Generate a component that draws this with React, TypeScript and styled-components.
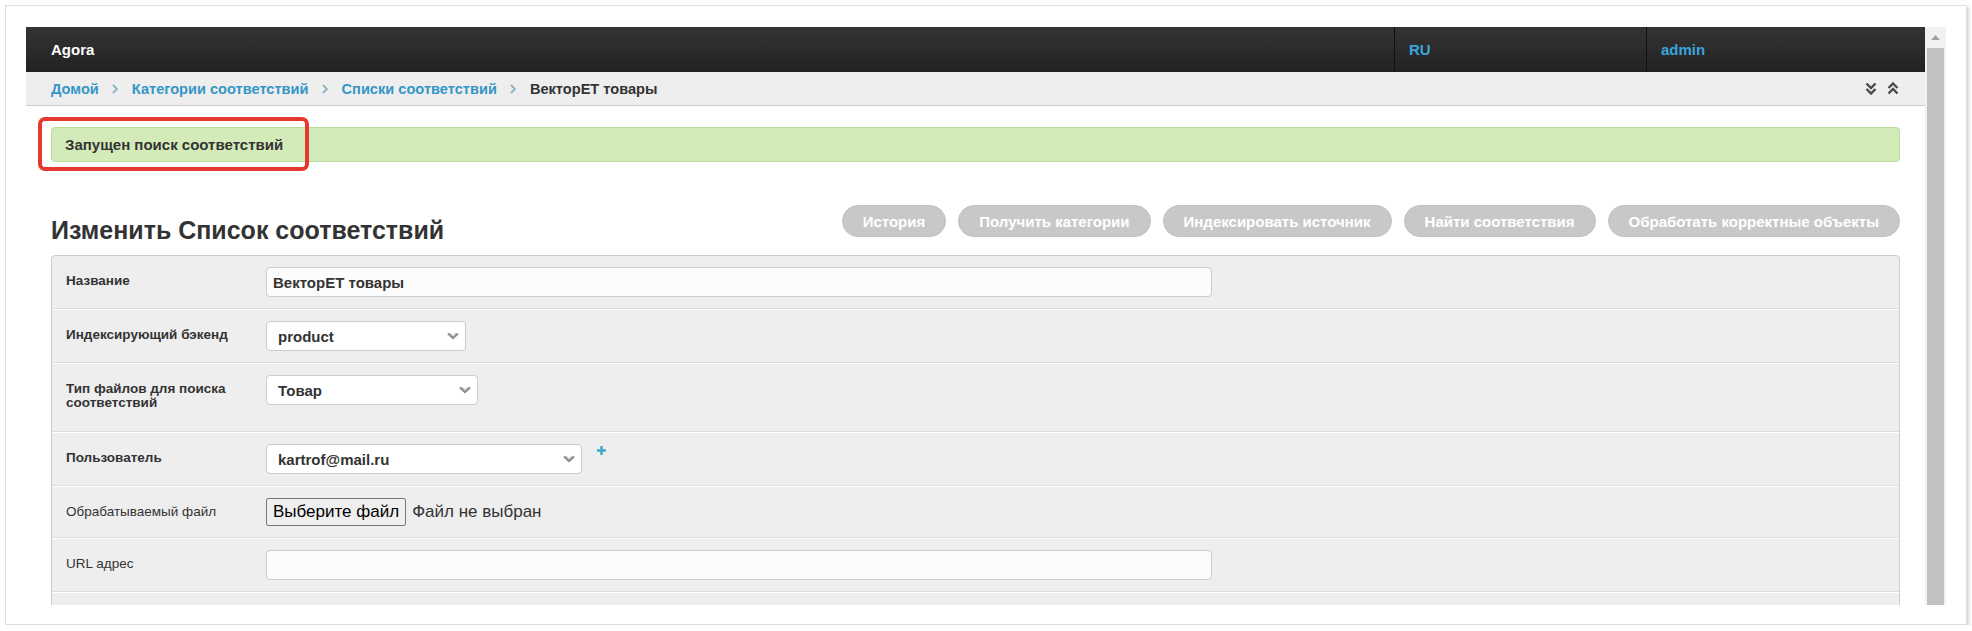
import styled, { createGlobalStyle } from "styled-components";

const GlobalStyle = createGlobalStyle`
  html, body {
    margin: 0;
    padding: 0;
    background: #fff;
  }
  body {
    font-family: "Liberation Sans", Arial, sans-serif;
    color: #333;
  }
`;

const Frame = styled.div`
  margin: 5px 0 0 5px;
  width: 1962px;
  height: 620px;
  box-sizing: border-box;
  border: 1px solid #dedede;
  box-shadow: 2px 2px 3px rgba(0, 0, 0, 0.16);
  background: #fff;
  padding: 21px 20px 19px;
`;

const Viewport = styled.div`
  display: flex;
  height: 578px;
  overflow: hidden;
`;

const Screen = styled.div`
  flex: 1;
  min-width: 0;
  overflow: hidden;
`;

const Scrollbar = styled.div`
  flex: 0 0 21px;
  background: #f1f1f1;
  display: flex;
  flex-direction: column;
  align-items: center;
`;

const ScrollArrow = styled.div`
  height: 21px;
  display: flex;
  align-items: center;
  justify-content: center;
`;

const ScrollThumb = styled.div`
  flex: 1;
  width: 17px;
  background: #c1c1c1;
`;

const NavBar = styled.header`
  height: 45px;
  display: flex;
  background: linear-gradient(#343434, #222);
`;

const Brand = styled.div`
  flex: 1;
  padding-left: 25px;
  display: flex;
  align-items: center;
  color: #fff;
  font-size: 15px;
  font-weight: 700;
`;

const NavItem = styled.div<{ $width: number }>`
  width: ${(p) => p.$width}px;
  box-sizing: border-box;
  border-left: 1px solid #111;
  padding-left: 14px;
  display: flex;
  align-items: center;
  color: #3aa4dc;
  font-size: 15px;
  font-weight: 700;
`;

const Crumbs = styled.nav`
  height: 33px;
  border-bottom: 1px solid #ccc;
  background: #eee;
  display: flex;
  align-items: center;
  padding: 0 26px 0 25px;
  font-size: 14.6px;
  font-weight: 700;
`;

const CrumbLink = styled.a`
  color: #3596c6;
  text-decoration: none;
`;

const CrumbSep = styled.span`
  display: inline-flex;
  margin: 0 14px 0 13px;
`;

const CrumbCurrent = styled.span`
  color: #333;
`;

const CrumbTools = styled.div`
  margin-left: auto;
  display: flex;
  gap: 10px;
`;

const Main = styled.main`
  padding: 21px 25px 0;
`;

const AlertWrap = styled.div`
  position: relative;
`;

const Alert = styled.div`
  height: 35px;
  box-sizing: border-box;
  background: #d3ebb8;
  border: 1px solid #b9dd9b;
  border-radius: 4px;
  padding: 0 13px;
  display: flex;
  align-items: center;
  font-size: 15px;
  font-weight: 700;
  color: #333;
`;

const Highlight = styled.div`
  position: absolute;
  left: -13px;
  top: -10px;
  width: 271px;
  height: 54px;
  box-sizing: border-box;
  border: 4px solid #e5392f;
  border-radius: 7px;
  pointer-events: none;
`;

const HeaderRow = styled.div`
  display: flex;
  justify-content: space-between;
  align-items: flex-start;
  margin-top: 43px;
`;

const Title = styled.h1`
  margin: 13px 0 0;
  font-size: 25px;
  line-height: 24px;
  font-weight: 700;
  color: #333;
`;

const Actions = styled.div`
  display: flex;
  gap: 12px;
`;

const ActionButton = styled.button`
  height: 32px;
  padding: 0 20px;
  border: 1px solid #c2c2c2;
  border-radius: 16px;
  background: #c8c8c8;
  color: #fff;
  font: 700 15px "Liberation Sans", Arial, sans-serif;
`;

const Panel = styled.div`
  margin-top: 13px;
  border: 1px solid #ccc;
  border-radius: 4px;
  background: #eee;
`;

const Row = styled.div<{ $tall?: boolean }>`
  display: flex;
  align-items: flex-start;
  padding: 11px 14px ${(p) => (p.$tall ? 14 : 11)}px;
  border-top: 1px solid #fff;
  border-bottom: 1px solid #ddd;

  &:first-child {
    border-top: none;
  }
`;

const Label = styled.label<{ $plain?: boolean }>`
  flex: 0 0 180px;
  margin-right: 20px;
  padding: 7px 0;
  line-height: 14px;
  font-size: 13.5px;
  font-weight: ${(p) => (p.$plain ? 400 : 700)};
  color: #333;
`;

const TextInput = styled.input`
  width: 946px;
  height: 30px;
  box-sizing: border-box;
  border: 1px solid #ccc;
  border-radius: 4px;
  background: #fcfcfc;
  padding: 0 6px;
  font: 700 15px "Liberation Sans", Arial, sans-serif;
  color: #333;
  outline: none;
`;

const SelectBox = styled.div<{ $width: number }>`
  width: ${(p) => p.$width}px;
  height: 30px;
  box-sizing: border-box;
  border: 1px solid #ccc;
  border-radius: 4px;
  background: #fff;
  display: flex;
  align-items: center;
  justify-content: space-between;
  padding: 0 6px 0 11px;
  font-size: 15px;
  font-weight: 700;
  color: #333;
`;

const AddLink = styled.span`
  display: inline-flex;
  margin: 2px 0 0 15px;
`;

const FileButton = styled.button`
  height: 28px;
  padding: 0 6px;
  border: 1px solid #767676;
  border-radius: 2px;
  background: #efefef;
  color: #000;
  font: 400 17px "Liberation Sans", Arial, sans-serif;
`;

const FileName = styled.span`
  margin-left: 6px;
  line-height: 28px;
  font-size: 17px;
  color: #333;
`;

const Chevron = () => (
  <svg width="6" height="10" viewBox="0 0 6 10">
    <path d="M1 1 L5 5 L1 9" fill="none" stroke="#8fb0c4" strokeWidth="1.8" />
  </svg>
);

const DoubleDown = () => (
  <svg width="12" height="13" viewBox="0 0 12 13">
    <path d="M1.5 1.5 L6 6 L10.5 1.5 M1.5 7 L6 11.5 L10.5 7" fill="none" stroke="#4a4a4a" strokeWidth="2.4" />
  </svg>
);

const DoubleUp = () => (
  <svg width="12" height="13" viewBox="0 0 12 13">
    <path d="M1.5 6 L6 1.5 L10.5 6 M1.5 11.5 L6 7 L10.5 11.5" fill="none" stroke="#4a4a4a" strokeWidth="2.4" />
  </svg>
);

const SelectArrow = () => (
  <svg width="12" height="8" viewBox="0 0 12 8">
    <path d="M1 1.5 L6 6 L11 1.5" fill="none" stroke="#8a8a8a" strokeWidth="2.2" />
    <path d="M3 1 L6 3.5 L9 1" fill="none" stroke="#c4c4c4" strokeWidth="1" />
  </svg>
);

const Plus = () => (
  <svg width="9" height="9" viewBox="0 0 9 9">
    <path d="M4.5 0 V9 M0 4.5 H9" stroke="#3ea6c8" strokeWidth="2.4" />
  </svg>
);

const actions = [
  "История",
  "Получить категории",
  "Индексировать источник",
  "Найти соответствия",
  "Обработать корректные объекты",
];

function App() {
  return (
    <>
      <GlobalStyle />
      <Frame>
        <Viewport>
          <Screen>
            <NavBar>
              <Brand>Agora</Brand>
              <NavItem $width={252}>RU</NavItem>
              <NavItem $width={279}>admin</NavItem>
            </NavBar>

            <Crumbs>
              <CrumbLink href="#">Домой</CrumbLink>
              <CrumbSep>
                <Chevron />
              </CrumbSep>
              <CrumbLink href="#">Категории соответствий</CrumbLink>
              <CrumbSep>
                <Chevron />
              </CrumbSep>
              <CrumbLink href="#">Списки соответствий</CrumbLink>
              <CrumbSep>
                <Chevron />
              </CrumbSep>
              <CrumbCurrent>ВекторЕТ товары</CrumbCurrent>
              <CrumbTools>
                <DoubleDown />
                <DoubleUp />
              </CrumbTools>
            </Crumbs>

            <Main>
              <AlertWrap>
                <Alert>Запущен поиск соответствий</Alert>
                <Highlight />
              </AlertWrap>

              <HeaderRow>
                <Title>Изменить Список соответствий</Title>
                <Actions>
                  {actions.map((label) => (
                    <ActionButton key={label} type="button">
                      {label}
                    </ActionButton>
                  ))}
                </Actions>
              </HeaderRow>

              <Panel>
                <Row>
                  <Label>Название</Label>
                  <TextInput defaultValue="ВекторЕТ товары" />
                </Row>
                <Row>
                  <Label>Индексирующий бэкенд</Label>
                  <SelectBox $width={200}>
                    product
                    <SelectArrow />
                  </SelectBox>
                </Row>
                <Row $tall>
                  <Label>Тип файлов для поиска соответствий</Label>
                  <SelectBox $width={212}>
                    Товар
                    <SelectArrow />
                  </SelectBox>
                </Row>
                <Row>
                  <Label>Пользователь</Label>
                  <SelectBox $width={316}>
                    kartrof@mail.ru
                    <SelectArrow />
                  </SelectBox>
                  <AddLink>
                    <Plus />
                  </AddLink>
                </Row>
                <Row>
                  <Label $plain>Обрабатываемый файл</Label>
                  <FileButton type="button">Выберите файл</FileButton>
                  <FileName>Файл не выбран</FileName>
                </Row>
                <Row>
                  <Label $plain>URL адрес</Label>
                  <TextInput defaultValue="" />
                </Row>
                <Row>
                  <Label $plain>&nbsp;</Label>
                </Row>
              </Panel>
            </Main>
          </Screen>

          <Scrollbar>
            <ScrollArrow>
              <svg width="9" height="5" viewBox="0 0 9 5">
                <path d="M0 5 L4.5 0 L9 5 Z" fill="#a3a3a3" />
              </svg>
            </ScrollArrow>
            <ScrollThumb />
          </Scrollbar>
        </Viewport>
      </Frame>
    </>
  );
}

export default App;
